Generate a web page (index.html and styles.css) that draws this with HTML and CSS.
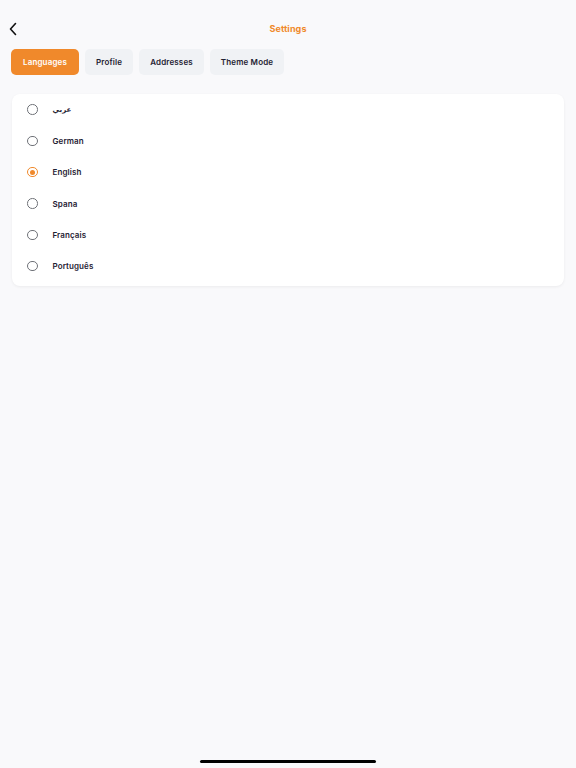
FILE: index.html
```html
<!DOCTYPE html>
<html lang="en">
<head>
    <meta charset="UTF-8">
    <meta name="viewport" content="width=device-width, initial-scale=1.0">
    <title>Settings</title>
    <link rel="stylesheet" href="styles.css">
</head>
<body>
    <div class="screen">
        <!-- Верхняя панель -->
        <header class="topbar">
            <button class="back" aria-label="Back">
                <svg width="10" height="14" viewBox="0 0 10 14">
                    <path d="M7.5 1.5 L2.5 7 L7.5 12.5" fill="none" stroke="#111" stroke-width="1.6" stroke-linecap="round" stroke-linejoin="round"/>
                </svg>
            </button>
            <h1 class="title">Settings</h1>
        </header>

        <!-- Вкладки -->
        <nav class="tabs">
            <button class="tab active">Languages</button>
            <button class="tab">Profile</button>
            <button class="tab">Addresses</button>
            <button class="tab">Theme Mode</button>
        </nav>

        <!-- Список языков -->
        <div class="card">
            <label class="lang"><span class="radio"></span><span class="lang-name ar">عربي</span></label>
            <label class="lang"><span class="radio"></span><span class="lang-name">German</span></label>
            <label class="lang"><span class="radio checked"></span><span class="lang-name">English</span></label>
            <label class="lang"><span class="radio"></span><span class="lang-name">Spana</span></label>
            <label class="lang"><span class="radio"></span><span class="lang-name">Français</span></label>
            <label class="lang"><span class="radio"></span><span class="lang-name">Português</span></label>
        </div>

        <div class="home-bar"></div>
    </div>
</body>
</html>
```

FILE: styles.css
```css
/* Основа */
body {
    margin: 0;
    font-family: 'Inter', 'Noto Sans', sans-serif;
    background-color: #f9f9fb;
    color: #1f2233;
}

.screen {
    width: 576px;
    height: 768px;
    position: relative;
    padding: 0 12px;
    box-sizing: border-box;
}

/* Верхняя панель */
.topbar {
    height: 42px;
    padding-top: 7px;
    display: flex;
    align-items: center;
    justify-content: center;
    position: relative;
}

.back {
    position: absolute;
    left: -4px;
    top: 22px;
    border: none;
    background: none;
    padding: 0;
    width: 10px;
    height: 14px;
    display: flex;
}

.title {
    margin: 0;
    font-size: 9px;
    font-weight: 700;
    color: #f0892b;
    letter-spacing: 0.1px;
}

/* Вкладки */
.tabs {
    display: flex;
    gap: 6px;
    margin-left: -1px;
}

.tab {
    height: 26px;
    padding: 0 11px;
    border: none;
    border-radius: 5px;
    background-color: #f0f2f5;
    color: #1f2233;
    font-family: inherit;
    font-size: 8px;
    font-weight: 600;
    letter-spacing: 0.15px;
}

.tab.active {
    padding: 0 12px;
    background-color: #f0892b;
    color: #ffffff;
}

/* Карточка */
.card {
    margin-top: 19px;
    background-color: #ffffff;
    border-radius: 8px;
    box-shadow: 0 1px 3px rgba(0, 0, 0, 0.06);
    padding: 0 0 4px;
}

.lang {
    height: 31.3px;
    display: flex;
    align-items: center;
    padding-left: 15px;
}

.radio {
    width: 8.5px;
    height: 8.5px;
    border: 1.4px solid #6f7278;
    border-radius: 50%;
    box-sizing: content-box;
    margin-right: 15px;
    display: flex;
    align-items: center;
    justify-content: center;
}

.radio.checked {
    border-color: #f0892b;
}

.radio.checked::after {
    content: '';
    width: 5px;
    height: 5px;
    border-radius: 50%;
    background-color: #f0892b;
}

.lang-name {
    font-size: 8px;
    font-weight: 600;
    color: #1f2233;
    letter-spacing: 0.1px;
}

.lang-name.ar {
    font-family: 'DejaVu Sans', sans-serif;
    font-size: 7px;
}

/* Индикатор "домой" */
.home-bar {
    position: absolute;
    left: 200px;
    bottom: 5px;
    width: 176px;
    height: 3px;
    border-radius: 2px;
    background-color: #000;
}
```
